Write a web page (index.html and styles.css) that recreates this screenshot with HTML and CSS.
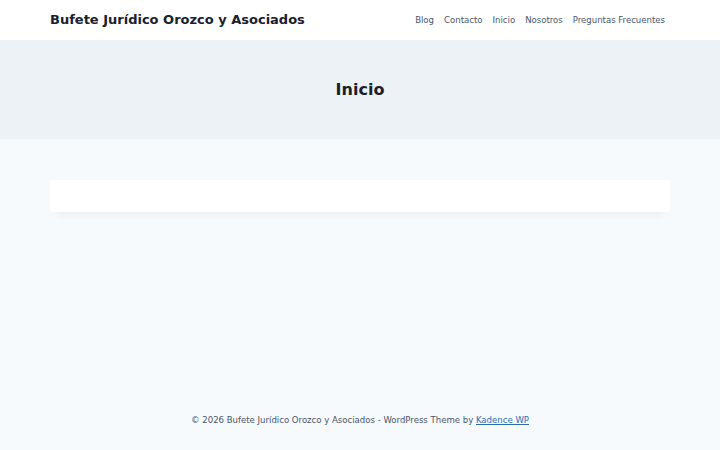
FILE: index.html
```html
<!DOCTYPE html>
<html lang="es">
<head>
  <meta charset="UTF-8" />
  <title>Inicio – Bufete Jurídico Orozco y Asociados</title>
  <link rel="stylesheet" href="styles.css">
</head>
<body>
  <div class="site">
    <header class="site-header">
      <div class="header-inner">
        <a class="brand" href="#">Bufete Jurídico Orozco y Asociados</a>
        <nav class="main-nav">
          <a href="#">Blog</a>
          <a href="#">Contacto</a>
          <a href="#">Inicio</a>
          <a href="#">Nosotros</a>
          <a href="#">Preguntas Frecuentes</a>
        </nav>
      </div>
    </header>

    <section class="hero">
      <h1>Inicio</h1>
    </section>

    <main class="content">
      <div class="entry"></div>
    </main>

    <footer class="site-footer">
      <p>© 2026 Bufete Jurídico Orozco y Asociados - WordPress Theme by <a href="#">Kadence WP</a></p>
    </footer>
  </div>
</body>
</html>
```

FILE: styles.css
```css
body {
  margin: 0;
  font-family: "DejaVu Sans", sans-serif;
  background: #f7fafc;
  color: #2d3748;
}

a {
  text-decoration: none;
}

.site {
  min-height: 450px;
  display: flex;
  flex-direction: column;
}

.site-header {
  background: #ffffff;
}

.header-inner {
  height: 40px;
  padding: 0 55px 0 50px;
  display: flex;
  align-items: center;
  justify-content: space-between;
}

.brand {
  font-size: 13px;
  font-weight: bold;
  color: #1a202c;
  margin-top: -2px;
}

.main-nav {
  display: flex;
  gap: 10px;
}

.main-nav a {
  font-family: "DejaVu Sans Condensed", "DejaVu Sans", sans-serif;
  font-size: 9.5px;
  color: #4a5568;
  margin-top: -2px;
}

.hero {
  background: #edf2f7;
  height: 99px;
  display: flex;
  align-items: center;
  justify-content: center;
}

.hero h1 {
  margin: 0;
  font-size: 16px;
  font-weight: bold;
  color: #1a202c;
}

.content {
  flex: 1;
  padding: 41px 50px 0;
}

.entry {
  background: #ffffff;
  height: 32px;
  border-radius: 2px;
  box-shadow: 0 8px 10px -6px rgba(0, 0, 0, 0.06);
}

.site-footer {
  height: 48px;
  text-align: center;
}

.site-footer p {
  margin: 12px 0 0;
  font-family: "DejaVu Sans Condensed", "DejaVu Sans", sans-serif;
  font-size: 9.5px;
  color: #4a5568;
}

.site-footer a {
  color: #2b6cb0;
  text-decoration: underline;
}
```
